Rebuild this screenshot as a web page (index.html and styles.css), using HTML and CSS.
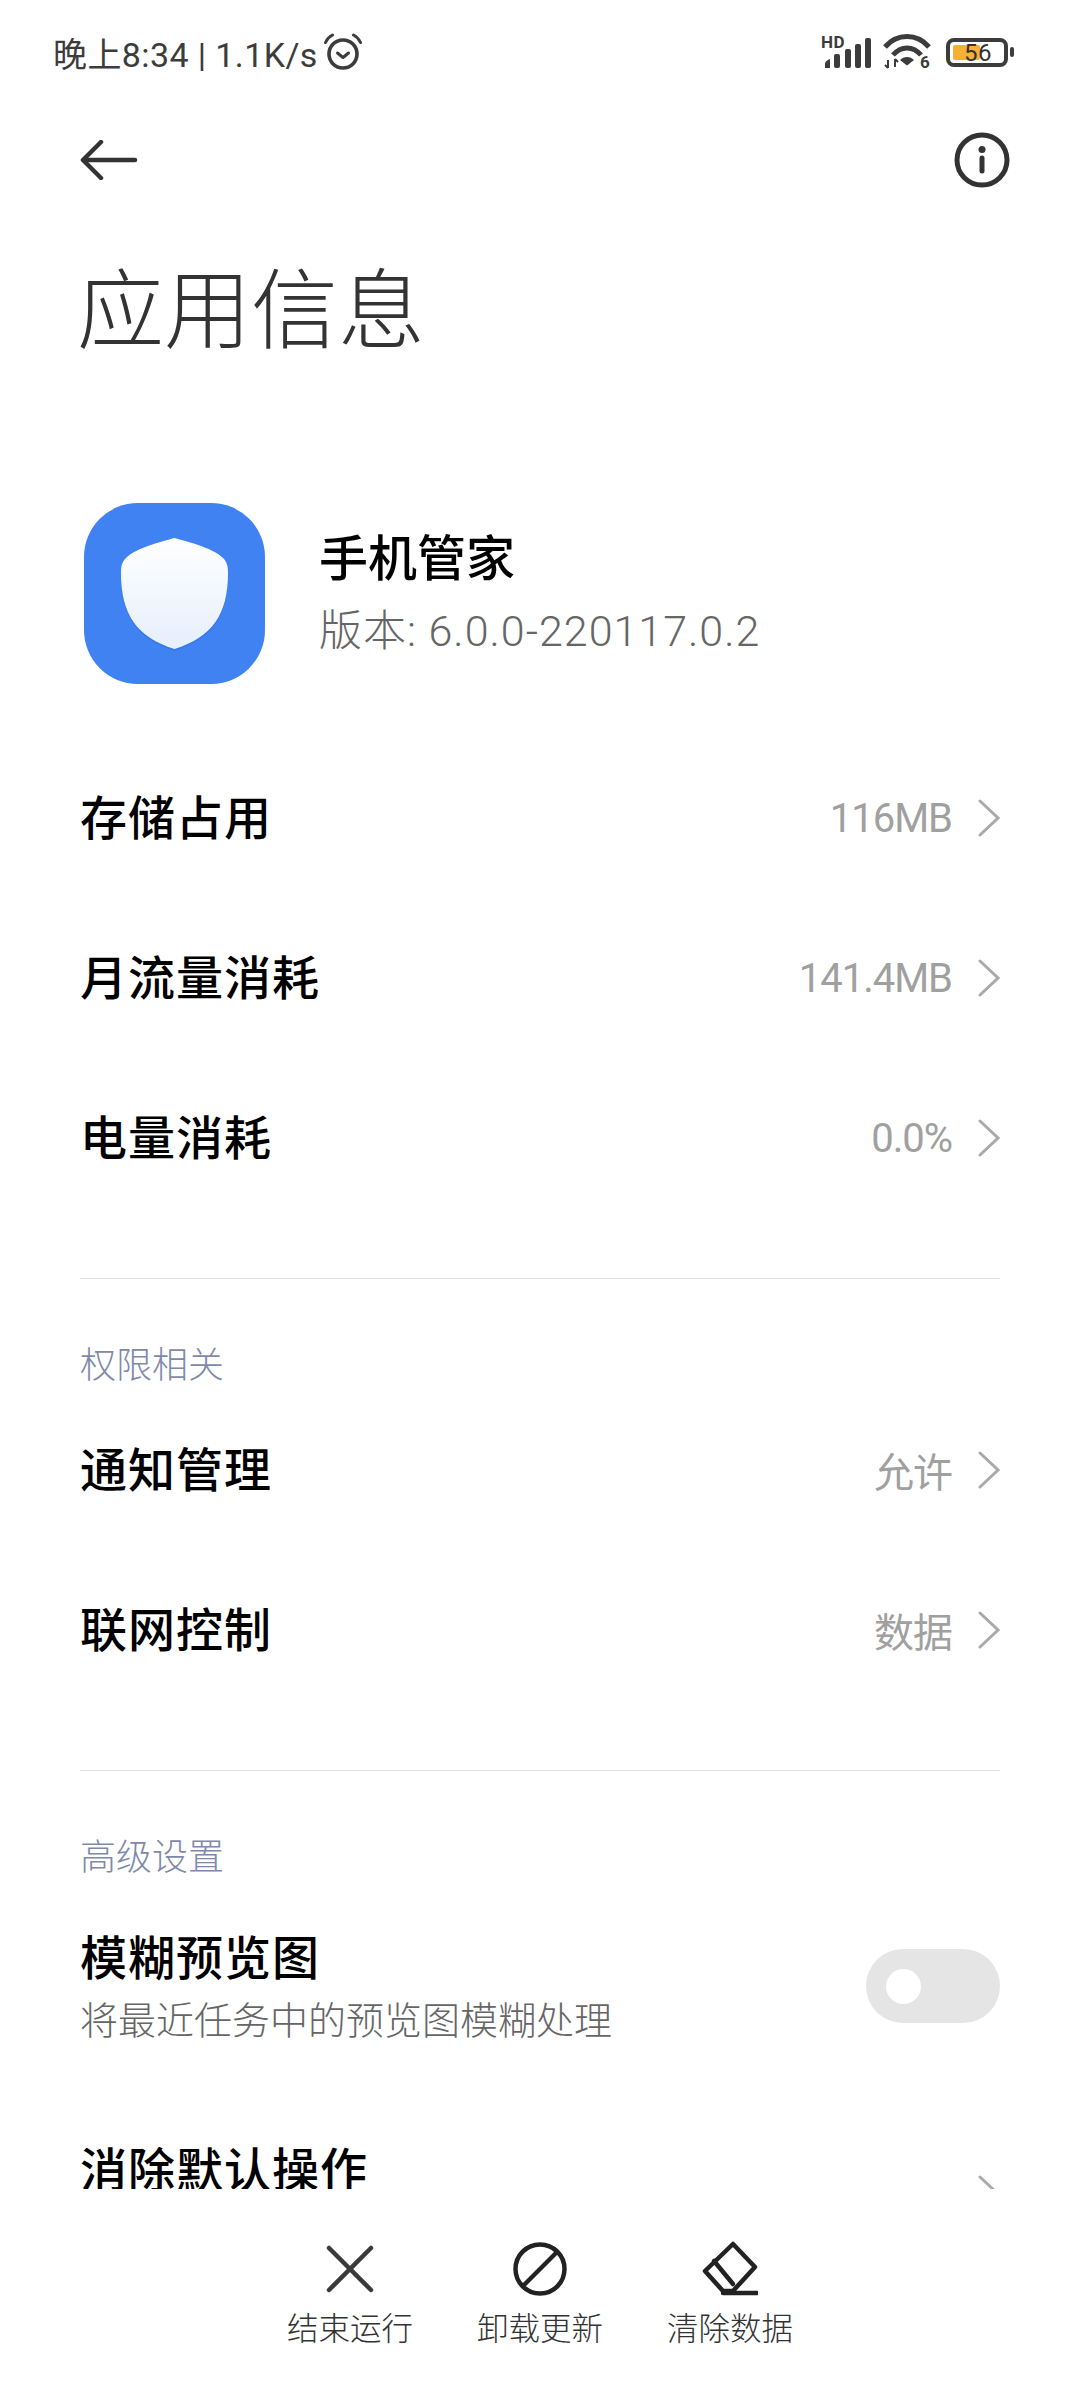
FILE: index.html
```html
<!DOCTYPE html>
<html lang="zh-CN">
<head>
  <meta charset="UTF-8" />
  <meta name="viewport" content="width=device-width, initial-scale=1.0"/>
  <title>应用信息</title>
  <link rel="stylesheet" href="styles.css">
</head>
<body>
  <div class="page">
    <div class="status-bar">
      <div class="status-left">
        <span>晚上8:34 | 1.1K/s</span>
        <svg class="alarm" width="40" height="38" viewBox="0 0 40 38" fill="none" stroke="#3c3c3c" stroke-linecap="round" stroke-linejoin="round">
          <circle cx="20" cy="21" r="14" stroke-width="3.6"/>
          <path d="M14.5 20l5.5 4.5 5.5-4.5" stroke-width="3"/>
          <path d="M2.5 9.5C4 6 6.5 3.5 9.5 2M37.5 9.5C36 6 33.500 3.500 30.500 2" stroke-width="3"/>
        </svg>
      </div>
      <div class="status-right">
        <svg width="52" height="42" viewBox="0 0 52 42">
          <text x="0" y="17" class="tiny">HD</text>
          <path d="M4 37v-4q0-3 5-5v9z" fill="#3c3c3c"/>
          <rect x="13" y="23" width="6" height="14" rx="2" fill="#3c3c3c"/>
          <rect x="24" y="18" width="6" height="19" rx="2" fill="#3c3c3c"/>
          <rect x="34" y="13" width="6" height="24" rx="2" fill="#3c3c3c"/>
          <rect x="44" y="7" width="6" height="30" rx="2" fill="#3c3c3c"/>
        </svg>
        <svg width="48" height="42" viewBox="0 0 48 42" fill="none">
          <path d="M2 16C14 2 34 2 46 16" stroke="#3c3c3c" stroke-width="5"/>
          <path d="M10 24C18 14.500 30 14.500 38 24" stroke="#3c3c3c" stroke-width="5"/>
          <path d="M17 29c4-4 10-4 14 0l-7 5.500z" fill="#3c3c3c"/>
          <path d="M5 29v8M2 34l3 3M12 28v8M12 28l3 3" stroke="#3c3c3c" stroke-width="2"/>
          <text x="37" y="37" class="tiny">6</text>
        </svg>
        <div class="battery">
          <div class="battery-body">
            <div class="battery-fill"></div>
            <span class="battery-num">56</span>
          </div>
          <div class="battery-tip"></div>
        </div>
      </div>
    </div>

    <div class="nav">
      <svg width="58" height="40" viewBox="0 0 58 40" fill="none" stroke="#333" stroke-width="4.500" stroke-linecap="round" stroke-linejoin="round">
        <path d="M21 2L3 20l18 18M3 20h52"/>
      </svg>
      <svg width="56" height="56" viewBox="0 0 56 56" fill="none" stroke="#333">
        <circle cx="28" cy="28" r="25" stroke-width="5"/>
        <circle cx="28" cy="17.500" r="3.500" fill="#333" stroke="none"/>
        <path d="M28 26v13" stroke-width="5" stroke-linecap="round"/>
      </svg>
    </div>

    <h1 class="title">应用信息</h1>

    <div class="app-head">
      <svg class="app-icon" width="181" height="181" viewBox="0 0 181 181">
        <defs>
          <linearGradient id="shield" x1="0" y1="0" x2="0" y2="1">
            <stop offset="0" stop-color="#ffffff"/>
            <stop offset="1" stop-color="#e6eefd"/>
          </linearGradient>
        </defs>
        <rect width="181" height="181" rx="54" fill="#4182f3"/>
        <path d="M90.500 35C100 38 128 44 139 55C143 59 144 63 144 70C144 112 128 134 90.500 146C53 134 37 112 37 70C37 63 38 59 42 55C53 44 81 38 90.500 35Z" fill="#2f6fe0" opacity=".5" transform="translate(0 2)"/>
        <path d="M90.500 35C100 38 128 44 139 55C143 59 144 63 144 70C144 112 128 134 90.500 146C53 134 37 112 37 70C37 63 38 59 42 55C53 44 81 38 90.500 35Z" fill="url(#shield)"/>
      </svg>
      <div class="app-text">
        <div class="app-name">手机管家</div>
        <div class="app-version">版本: 6.0.0-220117.0.2</div>
      </div>
    </div>

    <div class="rows">
      <div class="row">
        <span class="row-title">存储占用</span>
        <span class="row-value">116MB</span>
        <svg class="chevron" width="22" height="38" viewBox="0 0 22 38"><path d="M2 2l18 17L2 36"/></svg>
      </div>
      <div class="row">
        <span class="row-title">月流量消耗</span>
        <span class="row-value">141.4MB</span>
        <svg class="chevron" width="22" height="38" viewBox="0 0 22 38"><path d="M2 2l18 17L2 36"/></svg>
      </div>
      <div class="row">
        <span class="row-title">电量消耗</span>
        <span class="row-value">0.0%</span>
        <svg class="chevron" width="22" height="38" viewBox="0 0 22 38"><path d="M2 2l18 17L2 36"/></svg>
      </div>
    </div>

    <div class="divider"></div>
    <div class="section-label">权限相关</div>

    <div class="rows">
      <div class="row">
        <span class="row-title">通知管理</span>
        <span class="row-value">允许</span>
        <svg class="chevron" width="22" height="38" viewBox="0 0 22 38"><path d="M2 2l18 17L2 36"/></svg>
      </div>
      <div class="row">
        <span class="row-title">联网控制</span>
        <span class="row-value">数据</span>
        <svg class="chevron" width="22" height="38" viewBox="0 0 22 38"><path d="M2 2l18 17L2 36"/></svg>
      </div>
    </div>

    <div class="divider"></div>
    <div class="section-label">高级设置</div>

    <div class="rows">
      <div class="row row-tall">
        <div class="row-text">
          <div class="row-title">模糊预览图</div>
          <div class="row-sub">将最近任务中的预览图模糊处理</div>
        </div>
        <div class="switch"><div class="knob"></div></div>
      </div>
      <div class="row row-tall">
        <div class="row-text">
          <div class="row-title">消除默认操作</div>
        </div>
        <svg class="chevron" width="22" height="38" viewBox="0 0 22 38"><path d="M2 2l18 17L2 36"/></svg>
      </div>
    </div>

    <div class="bottom-bar">
      <div class="action">
        <svg width="56" height="56" viewBox="0 0 56 56" fill="none" stroke="#3a3a3a" stroke-width="4.500" stroke-linecap="round">
          <path d="M7 7l42 42M49 7L7 49"/>
        </svg>
        <span>结束运行</span>
      </div>
      <div class="action">
        <svg width="56" height="56" viewBox="0 0 56 56" fill="none" stroke="#222" stroke-width="4.500">
          <circle cx="28" cy="28" r="24.500"/>
          <path d="M11 45L45 11"/>
        </svg>
        <span>卸载更新</span>
      </div>
      <div class="action">
        <svg width="56" height="56" viewBox="0 0 56 56" fill="none" stroke="#222" stroke-width="4.500" stroke-linecap="round" stroke-linejoin="round">
          <path d="M31 3L53 26 31 50H21L3 30z"/>
          <path d="M12 20l19 23"/>
          <path d="M21 52h34"/>
        </svg>
        <span>清除数据</span>
      </div>
    </div>
  </div>
</body>
</html>
```

FILE: styles.css
```css
html, body {
  margin: 0;
  padding: 0;
  background-color: #fff;
}

.page {
  position: relative;
  width: 1080px;
  height: 2400px;
  overflow: hidden;
  font-family: "Roboto", "Noto Sans CJK SC", sans-serif;
  color: #000;
}

.status-bar {
  height: 104px;
  padding: 0 66px 0 53px;
  display: flex;
  align-items: center;
  justify-content: space-between;
  color: #3c3c3c;
  font-size: 34px;
  letter-spacing: 0.4px;
}

.status-left {
  display: flex;
  align-items: center;
  gap: 5px;
}

.status-right {
  display: flex;
  align-items: center;
  gap: 10px;
}

.tiny {
  font-family: "Roboto", sans-serif;
  font-size: 17px;
  font-weight: 700;
  fill: #3c3c3c;
}

.battery {
  display: flex;
  align-items: center;
  gap: 2px;
  margin-left: 5px;
}

.battery-body {
  position: relative;
  width: 62px;
  height: 29px;
  box-sizing: border-box;
  border: 4px solid #3c3c3c;
  border-radius: 8px;
}

.battery-fill {
  position: absolute;
  left: 3px;
  top: 3px;
  width: 27px;
  height: 15px;
  border-radius: 2px;
  background-color: #f5b035;
}

.battery-num {
  position: absolute;
  left: 14px;
  top: -3px;
  font-size: 24px;
  line-height: 28px;
  color: #333;
}

.battery-tip {
  width: 4px;
  height: 10px;
  border-radius: 2px;
  background-color: #3c3c3c;
}

.nav {
  height: 112px;
  padding: 0 70px 0 80px;
  display: flex;
  align-items: center;
  justify-content: space-between;
}

.title {
  margin: 0;
  height: 187px;
  padding-left: 77px;
  font-size: 87px;
  font-weight: 300;
  line-height: 192px;
  color: #333;
}

.app-head {
  height: 181px;
  margin-top: 100px;
  padding-left: 84px;
  display: flex;
  align-items: center;
  gap: 54px;
}

.app-name {
  font-size: 49px;
  font-weight: 500;
  line-height: 70px;
}

.app-version {
  font-size: 43px;
  line-height: 64px;
  margin-top: 4px;
  letter-spacing: 1px;
  color: #666;
  font-weight: 300;
}

.rows {
  padding: 0 80px;
}

.app-head + .rows {
  margin-top: 54px;
}

.row {
  height: 160px;
  display: flex;
  align-items: center;
}

.row-title {
  font-size: 47px;
  font-weight: 500;
  letter-spacing: 1px;
  line-height: 63px;
}

.row-value {
  margin-left: auto;
  font-size: 40px;
  font-weight: 400;
  letter-spacing: -1px;
  color: #a0a0a0;
}

.chevron {
  margin-left: 26px;
  fill: none;
  stroke: #aaa;
  stroke-width: 3;
  stroke-linecap: round;
}

.row-tall {
  height: 208px;
  justify-content: space-between;
}

.row-tall + .row-tall .row-text {
  padding-top: 16px;
}

.row-text {
  min-height: 126px;
  padding-top: 8px;
}

.row-sub {
  font-size: 38px;
  line-height: 63px;
  font-weight: 300;
  color: #666;
}

.switch {
  width: 134px;
  height: 74px;
  border-radius: 37px;
  background-color: #e5e5e5;
  display: flex;
  align-items: center;
  padding-left: 20px;
  box-sizing: border-box;
}

.knob {
  width: 35px;
  height: 35px;
  border-radius: 50%;
  background-color: #fff;
}

.divider {
  margin: 60px 80px 0;
  height: 1px;
  background-color: #e0e0e0;
}

.section-label {
  margin-top: 57px;
  padding-left: 80px;
  font-size: 36px;
  line-height: 60px;
  height: 54px;
  font-weight: 300;
  color: #7f89ab;
}

.bottom-bar {
  position: absolute;
  left: 0;
  right: 0;
  top: 2189px;
  bottom: 0;
  background-color: #fff;
  display: flex;
  justify-content: center;
  padding-top: 52px;
  box-sizing: border-box;
}

.action {
  width: 190px;
  display: flex;
  flex-direction: column;
  align-items: center;
  gap: 6px;
  font-size: 31.5px;
  font-weight: 300;
  color: #333;
}
```
